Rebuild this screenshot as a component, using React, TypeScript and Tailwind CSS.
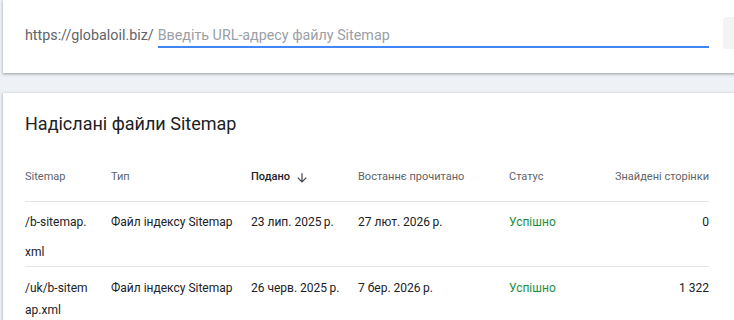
import React from "react";

const rows = [
  {
    sitemap: ["/b-sitemap.", "xml"],
    type: "Файл індексу Sitemap",
    submitted: "23 лип. 2025\u2009р.",
    read: "27 лют. 2026\u2009р.",
    status: "Успішно",
    pages: "0",
    cls: "pt-[5px] leading-[30px]",
  },
  {
    sitemap: ["/uk/b-sitem", "ap.xml"],
    type: "Файл індексу Sitemap",
    submitted: "26 черв. 2025\u2009р.",
    read: "7 бер. 2026\u2009р.",
    status: "Успішно",
    pages: "1 322",
    cls: "pt-[10px] leading-[22px]",
  },
];

const cols = "grid grid-cols-[86px_140px_107px_151px_1fr]";

export default function App() {
  return (
    <div
      className="w-[734px] h-[320px] overflow-hidden bg-[#eef1f5] pl-[3px]"
      style={{ fontFamily: "Roboto, 'Noto Sans', sans-serif" }}
    >
      <div className="w-[790px] h-[73px] bg-white shadow-[0_1px_2px_rgba(60,64,67,0.35),0_1px_3px_1px_rgba(60,64,67,0.12)] flex items-start pl-[22px] pt-[17px]">
        <span className="shrink-0 text-[14.3px] leading-[20px] text-[#5f6368] mt-[8px] mr-[4px] whitespace-nowrap">
          https://globaloil.biz/
        </span>
        <div className="shrink-0 w-[551px] h-[31px] border-b-2 border-[#4285f4] flex items-end pb-[1px]">
          <span className="text-[14.3px] leading-[20px] text-[#9aa0a6] whitespace-nowrap">
            Введіть URL-адресу файлу Sitemap
          </span>
        </div>
        <div className="shrink-0 ml-[14px] w-[60px] h-[32px] rounded bg-[#f3f3f4]" />
      </div>

      <div className="mt-[20px] w-[740px] bg-white shadow-[0_1px_2px_rgba(60,64,67,0.3),0_1px_3px_1px_rgba(60,64,67,0.15)] pl-[22px] pr-[9px] pt-[19px] pb-[20px]">
        <h2 className="text-[18px] leading-[24px] text-[#202124] font-normal">
          Надіслані файли Sitemap
        </h2>
        <div className={`${cols} mt-[14px] h-[52px] pt-[4px] items-center text-[11px] text-[#5f6368] border-b border-[#e3e5e8] w-[684px]`}>
          <div>Sitemap</div>
          <div>Тип</div>
          <div className="flex items-center gap-[5px] text-[#202124] font-medium">
            <span>Подано</span>
            <svg width="14" height="14" viewBox="0 0 24 24" className="fill-[#3c4043]">
              <path d="M20 12l-1.41-1.41L13 16.17V4h-2v12.17l-5.58-5.59L4 12l8 8 8-8z" />
            </svg>
          </div>
          <div>Востаннє прочитано</div>
          <div className="grid grid-cols-[1fr_auto]">
            <span>Статус</span>
            <span>Знайдені сторінки</span>
          </div>
        </div>
        {rows.map((r, i) => (
          <div
            key={i}
            className={`${cols} ${r.cls} w-[684px] h-[65px] text-[12px] text-[#202124] border-b border-[#e3e5e8]`}
          >
            <div>
              {r.sitemap[0]}
              <br />
              {r.sitemap[1]}
            </div>
            <div className="whitespace-nowrap">{r.type}</div>
            <div className="whitespace-nowrap">{r.submitted}</div>
            <div className="whitespace-nowrap">{r.read}</div>
            <div className="grid grid-cols-[1fr_auto]">
              <span className="text-[#1e8e3e]">{r.status}</span>
              <span>{r.pages}</span>
            </div>
          </div>
        ))}
      </div>
    </div>
  );
}
